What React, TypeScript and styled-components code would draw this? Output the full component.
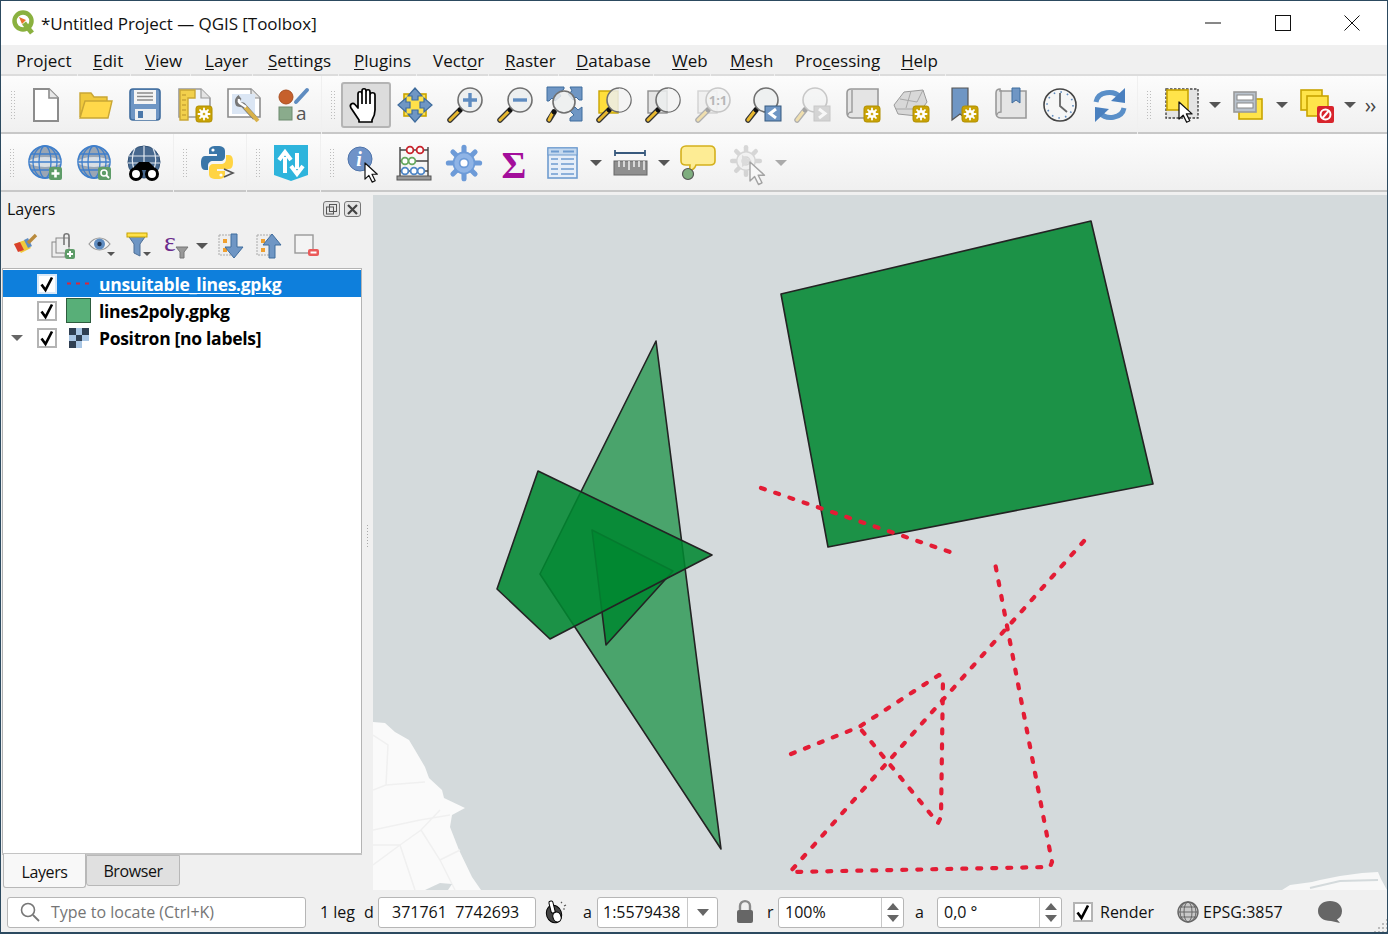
import React from 'react';
import styled, { createGlobalStyle } from 'styled-components';

const UI_FONT = `'Open Sans', 'Noto Sans', sans-serif`;

const GlobalStyle = createGlobalStyle`
  html, body { margin: 0; padding: 0; overflow: hidden; background: #f0f0f0; }
  * { box-sizing: border-box; }
`;

const Window = styled.div`
  width: 1388px;
  height: 934px;
  display: flex;
  flex-direction: column;
  background: #f0f0f0;
  border: 1px solid #2c4a60;
  border-bottom-width: 2px;
  font-family: ${UI_FONT};
  color: #111;
  overflow: hidden;
`;

const TitleBar = styled.div`
  height: 44px;
  background: #fff;
  display: flex;
  align-items: center;
  padding-left: 10px;
  flex: none;
`;

const TitleText = styled.div`
  margin-left: 4px;
  font-size: 17px;
  letter-spacing: -0.05px;
`;

const WindowButtons = styled.div`
  margin-left: auto;
  display: flex;
`;

const WindowButton = styled.div`
  width: 69.5px;
  height: 44px;
  display: flex;
  align-items: center;
  justify-content: center;
`;

const MenuBar = styled.div`
  height: 31px;
  display: flex;
  gap: 1px;
  flex: none;
`;

const MenuItem = styled.div<{ $w: number; $pl: number }>`
  width: ${(p) => p.$w}px;
  padding-left: ${(p) => p.$pl}px;
  height: 31px;
  line-height: 31px;
  font-size: 17px;
  white-space: nowrap;
  border-bottom: 2px solid #dcdcdc;
  u { text-underline-offset: 2px; }
`;

const MenuFill = styled.div`
  flex: 1;
  border-bottom: 2px solid #dcdcdc;
  margin-right: 1px;
`;

const ToolRow = styled.div`
  height: 58px;
  display: flex;
  gap: 1px;
  flex: none;
`;

const ToolGroup = styled.div<{ $w?: number; $pad: number }>`
  ${(p) => (p.$w ? `width: ${p.$w}px;` : 'flex: 1;')}
  padding: 2px 0 0 ${(p) => p.$pad}px;
  display: flex;
  align-items: center;
  background: linear-gradient(#fcfcfc, #f0f0f0);
  border-bottom: 2px solid #c8c8c8;
`;

const Handle = styled.div`
  width: 6px;
  height: 30px;
  margin-right: 5px;
  flex: none;
  background-image: radial-gradient(#bdbdbd 0.8px, transparent 1px);
  background-size: 3px 3px;
`;

const Tool = styled.div<{ $active?: boolean; $off?: boolean }>`
  width: 49.6px;
  height: 46px;
  flex: none;
  display: flex;
  align-items: center;
  justify-content: center;
  border-radius: 3px;
  opacity: ${(p) => (p.$off ? 0.35 : 1)};
  ${(p) => p.$active && 'background: #dcdcdc; border: 2px solid #b4b4b4;'}
`;

const Drop = styled.div<{ $off?: boolean }>`
  width: 16px;
  margin-right: 2px;
  flex: none;
  display: flex;
  justify-content: center;
  &::after {
    content: '';
    border-left: 6px solid transparent;
    border-right: 6px solid transparent;
    border-top: 6px solid ${(p) => (p.$off ? '#aaa' : '#555')};
  }
`;

const PanelDrop = styled(Drop)`
  margin-left: -2px;
`;

const Chevrons = styled.div`
  margin-left: 5px;
  font-size: 21px;
  line-height: 21px;
  color: #444;
  letter-spacing: -1px;
`;

const Main = styled.div`
  flex: 1;
  min-height: 0;
  display: flex;
`;

const LeftPanel = styled.div`
  width: 361px;
  flex: none;
  display: flex;
  flex-direction: column;
`;

const PanelHeader = styled.div`
  height: 32px;
  padding: 2px 1px 0 6px;
  display: flex;
  align-items: center;
  justify-content: space-between;
  font-size: 16px;
`;

const DockButtons = styled.div`
  display: flex;
  gap: 4px;
`;

const DockButton = styled.div`
  width: 17px;
  height: 16px;
  border: 1.5px solid #777;
  border-radius: 3px;
  background: #e4e4e4;
  display: flex;
  align-items: center;
  justify-content: center;
`;

const PanelTools = styled.div`
  height: 44px;
  padding-left: 5px;
  display: flex;
  align-items: center;
`;

const PanelTool = styled.div`
  width: 38px;
  flex: none;
  display: flex;
  justify-content: center;
`;

const Tree = styled.div`
  flex: 1;
  margin-left: 1px;
  background: #fff;
  border: 1px solid #b4b4b4;
  border-bottom: none;
  padding-top: 1px;
`;

const TreeRow = styled.div<{ $selected?: boolean }>`
  height: 27px;
  display: flex;
  align-items: center;
  background: ${(p) => (p.$selected ? '#0e7fdc' : 'transparent')};
`;

const Expander = styled.div`
  width: 34px;
  flex: none;
  display: flex;
  justify-content: center;
  padding-right: 6px;
`;

const ExpandArrow = styled.div`
  border-left: 6px solid transparent;
  border-right: 6px solid transparent;
  border-top: 6px solid #666;
`;

const Check = styled.div<{ $selected?: boolean; $ml?: number }>`
  width: 20px;
  height: 20px;
  margin-left: ${(p) => p.$ml ?? 0}px;
  flex: none;
  background: #fff;
  border: 2px solid ${(p) => (p.$selected ? '#d8e8f8' : '#b4b4b4')};
  display: flex;
  align-items: center;
  justify-content: center;
`;

const LayerIcon = styled.div`
  width: 25px;
  height: 25px;
  margin: 0 8px 0 9px;
  flex: none;
  display: flex;
  align-items: center;
  justify-content: center;
`;

const LayerName = styled.div<{ $selected?: boolean }>`
  font-size: 17.5px;
  font-weight: 700;
  letter-spacing: -0.3px;
  white-space: nowrap;
  color: ${(p) => (p.$selected ? '#fff' : '#000')};
  ${(p) => p.$selected && 'text-decoration: underline; text-underline-offset: 2px;'}
`;

const TabBar = styled.div`
  height: 37px;
  flex: none;
  padding-left: 1px;
  display: flex;
  align-items: flex-start;
  border-top: 2px solid #c4c4c4;
  margin-left: 1px;
`;

const Tab = styled.div<{ $active?: boolean }>`
  height: ${(p) => (p.$active ? 34 : 31)}px;
  width: ${(p) => (p.$active ? 83 : 94)}px;
  margin-top: ${(p) => (p.$active ? -1 : 0)}px;
  padding-top: ${(p) => (p.$active ? 2 : 0)}px;
  background: ${(p) => (p.$active ? '#f8f8f8' : '#e0e0e0')};
  border: 1px solid #b8b8b8;
  border-top: ${(p) => (p.$active ? 'none' : '1px solid #b8b8b8')};
  border-radius: 0 0 3px 3px;
  font-size: 16px;
  letter-spacing: -0.4px;
  display: flex;
  align-items: center;
  justify-content: center;
`;

const Splitter = styled.div`
  width: 11px;
  flex: none;
  display: flex;
  align-items: center;
  justify-content: center;
  padding-bottom: 10px;
  &::after {
    content: '';
    width: 3px;
    height: 24px;
    background-image: radial-gradient(#aaa 0.8px, transparent 1px);
    background-size: 3px 3px;
  }
`;

const MapCanvas = styled.div`
  flex: 1;
  margin-top: 3px;
  background: #d4dadc;
  min-width: 0;
`;

const MapSvg = styled.svg`
  display: block;
  width: 100%;
  height: 100%;
`;

const StatusBar = styled.div`
  height: 42px;
  flex: none;
  padding: 2px 0 0 6px;
  display: flex;
  align-items: center;
  font-size: 16px;
  position: relative;
`;

const Field = styled.div<{ $w: number; $ml?: number }>`
  width: ${(p) => p.$w}px;
  margin-left: ${(p) => p.$ml ?? 0}px;
  height: 31px;
  flex: none;
  background: #fff;
  border: 1.5px solid #b6b6b6;
  border-radius: 3px;
  display: flex;
  align-items: center;
  overflow: hidden;
`;

const FieldText = styled.span<{ $pl: number; $muted?: boolean }>`
  padding-left: ${(p) => p.$pl}px;
  white-space: pre;
  flex: 1;
  display: flex;
  align-items: center;
  gap: 10px;
  color: ${(p) => (p.$muted ? '#757575' : '#111')};
`;

const StatusLabel = styled.div<{ $w: number; $ml?: number }>`
  width: ${(p) => p.$w}px;
  margin-left: ${(p) => p.$ml ?? 0}px;
  flex: none;
  white-space: nowrap;
`;

const StatusIcon = styled.div<{ $ml?: number }>`
  width: 24px;
  margin-left: ${(p) => p.$ml ?? 0}px;
  flex: none;
  display: flex;
  justify-content: center;
`;

const SpinBox = styled.div`
  width: 22px;
  height: 100%;
  flex: none;
  border-left: 1px solid #c8c8c8;
  display: flex;
  flex-direction: column;
  align-items: center;
  justify-content: center;
  gap: 5px;
`;

const SpinUp = styled.div`
  border-left: 6px solid transparent;
  border-right: 6px solid transparent;
  border-bottom: 7px solid #666;
`;

const SpinDown = styled.div`
  border-left: 6px solid transparent;
  border-right: 6px solid transparent;
  border-top: 7px solid #666;
`;

const ComboArrow = styled.div`
  width: 30px;
  height: 100%;
  flex: none;
  border-left: 1px solid #c8c8c8;
  display: flex;
  align-items: center;
  justify-content: center;
  &::after {
    content: '';
    border-left: 6px solid transparent;
    border-right: 6px solid transparent;
    border-top: 7px solid #666;
  }
`;

const SizeGrip = styled.div`
  position: absolute;
  right: 0;
  bottom: 0;
  width: 14px;
  height: 14px;
  background-image: radial-gradient(#bbb 0.8px, transparent 1px);
  background-size: 4px 4px;
  clip-path: polygon(100% 0, 100% 100%, 0 100%);
`;

const IconSvg = styled.svg`
  display: block;
  flex: none;
  overflow: visible;
`;

const Ico = ({ children, s = 36, v = 36 }: { children: React.ReactNode; s?: number; v?: number }) => (
  <IconSvg width={s} height={s} viewBox={`0 0 ${v} ${v}`}>
    {children}
  </IconSvg>
);

const TEETH = [0, 45, 90, 135];

// eight thin teeth round a body with a hole
const Gear = ({ cx, cy, r, color, body, hole }: { cx: number; cy: number; r: number; color: string; body?: string; hole: string }) => (
  <g>
    {TEETH.map((a) => (
      <line
        key={a}
        x1={cx}
        y1={cy - r * 0.92}
        x2={cx}
        y2={cy + r * 0.92}
        stroke={color}
        strokeWidth={r * 0.3}
        strokeLinecap="round"
        transform={`rotate(${a} ${cx} ${cy})`}
      />
    ))}
    <circle cx={cx} cy={cy} r={r * 0.62} fill={body ?? color} stroke={color} strokeWidth={r * 0.1} />
    <circle cx={cx} cy={cy} r={r * 0.26} fill={hole} stroke={color} strokeWidth={r * 0.1} />
  </g>
);

const Badge = ({ x, y, s = 16 }: { x: number; y: number; s?: number }) => (
  <g>
    <rect x={x} y={y} width={s} height={s} rx="2.5" fill="#c9a304" stroke="#b08e00" />
    <Gear cx={x + s / 2} cy={y + s / 2} r={s * 0.38} color="#fff" hole="#c9a304" />
  </g>
);

const Cursor = ({ x, y, s = 1 }: { x: number; y: number; s?: number }) => (
  <path
    transform={`translate(${x} ${y}) scale(${s})`}
    d="M0 0V19L4.6 14.6L8.5 22.5L12 20.8L8.2 13.2H14.5Z"
    fill="#fff"
    stroke="#111"
    strokeWidth="1.4"
    strokeLinejoin="round"
  />
);

// magnifier with the yellow handle, children are drawn in the lens
const Lens = ({ children, cx = 23, cy = 13, r = 12 }: { children?: React.ReactNode; cx?: number; cy?: number; r?: number }) => (
  <g>
    <line x1={cx - 10} y1={cy + 10} x2="3" y2="33" stroke="#333" strokeWidth="5.5" strokeLinecap="round" />
    <line x1={cx - 12} y1={cy + 12} x2="3" y2="33" stroke="#e9b92f" strokeWidth="3" strokeLinecap="round" />
    <circle cx={cx - 10} cy={cy + 10} r="2.4" fill="#111" />
    <circle cx={cx} cy={cy} r={r} fill="#eceeee" fillOpacity="0.85" stroke="#707070" strokeWidth="1.6" />
    {children}
  </g>
);

const NewIcon = () => (
  <Ico>
    <path d="M6 2H21L30 11V34H6Z" fill="#fff" stroke="#8c8c8c" strokeWidth="2" />
    <path d="M21 2V11H30" fill="#e8e8e8" stroke="#8c8c8c" strokeWidth="1.6" />
  </Ico>
);

const OpenIcon = () => (
  <Ico>
    <path d="M3 30V6H14L17 10H30V16H8Z" fill="#f0c93c" stroke="#c9a635" strokeWidth="1.4" />
    <path d="M8 14H35L31 31H3Z" fill="#ffd84a" stroke="#c9a635" strokeWidth="1.4" />
  </Ico>
);

const SaveIcon = () => (
  <Ico>
    <rect x="3" y="2" width="30" height="31" rx="3" fill="#6f96c4" stroke="#3f6c9d" strokeWidth="1.6" />
    <rect x="7" y="3" width="22" height="14" fill="#f4f4f4" />
    <path d="M10 6H26M10 9.5H26M10 13H26" stroke="#8a8a8a" strokeWidth="1.3" />
    <rect x="8" y="22" width="21" height="11" fill="#eef0f2" />
    <rect x="11" y="24" width="5" height="7" fill="#4b78aa" />
  </Ico>
);

const LayoutIcon = () => (
  <Ico>
    <path d="M2 2H24L33 11V30H2Z" fill="#f2f4f8" stroke="#9a9a9a" strokeWidth="1.6" />
    <path d="M24 2V11H33" fill="#e4e4e4" stroke="#9a9a9a" strokeWidth="1.2" />
    <path d="M3 3H18V11H11V33H3Z" fill="#f2d04c" stroke="#c9a635" strokeWidth="1.4" />
    <path d="M5 8H9M5 13H9M5 18H9M5 23H9M5 28H9" stroke="#b8912a" strokeWidth="1" />
    <Badge x={19} y={19} />
  </Ico>
);

const ManagerIcon = () => (
  <Ico>
    <path d="M2 2H25L34 11V30H2Z" fill="#fff" stroke="#8c8c8c" strokeWidth="1.6" />
    <path d="M25 2V11H34" fill="#e4e4e4" stroke="#8c8c8c" strokeWidth="1.2" />
    <rect x="6" y="7" width="23" height="20" fill="#dbe6f4" />
    <path d="M14 10A6 6 0 0 0 12 17L17 18L29 31" fill="none" stroke="#777" strokeWidth="5" strokeLinejoin="round" />
    <path d="M19 20L32 34" stroke="#d9b24a" strokeWidth="4" />
    <path d="M13 12A4 4 0 0 0 14 16L20 20" fill="none" stroke="#fff" strokeWidth="2.5" />
  </Ico>
);

const StyleIcon = () => (
  <Ico>
    <circle cx="10" cy="10" r="7" fill="#c6602c" stroke="#a94e20" />
    <line x1="20" y1="15" x2="31" y2="3" stroke="#5f8cc0" strokeWidth="4" strokeLinecap="round" />
    <rect x="3" y="20" width="13" height="13" fill="#8aab8c" stroke="#6c8a6e" />
    <text x="20" y="33" fontFamily="'Open Sans', sans-serif" fontSize="19" fill="#555">a</text>
  </Ico>
);

const HandIcon = () => (
  <Ico>
    <path
      d="M11 33L3 21C1 17.5 4.5 15 7 17.5L10 21V7C10 4 14 4 14 7V4C14 1 18 1 18 4V5C18 2 22 2 22 5V8C22 5 27 5 27 8V23C27 27 26 30 24 33V35H11ZM14 7V17M18 5V17M22 8V17"
      fill="#fff"
      stroke="#000"
      strokeWidth="1.7"
      strokeLinejoin="round"
    />
  </Ico>
);

const Arrow4 = ({ r }: { r: number }) => (
  <polygon
    transform={`rotate(${r} 18 18)`}
    points="18,1 25,9 21,9 21,13 15,13 15,9 11,9"
    fill="#6f96c4"
    stroke="#3f6c9d"
    strokeWidth="1.2"
  />
);

const PanSelectedIcon = () => (
  <Ico>
    <rect x="7" y="7" width="22" height="22" fill="#ffe14a" stroke="#c9a400" strokeWidth="1.6" />
    <Arrow4 r={0} />
    <Arrow4 r={90} />
    <Arrow4 r={180} />
    <Arrow4 r={270} />
  </Ico>
);

const ZoomInIcon = () => (
  <Ico>
    <Lens>
      <path d="M23 6V20M16 13H30" stroke="#5f8cc0" strokeWidth="3.4" />
    </Lens>
  </Ico>
);

const ZoomOutIcon = () => (
  <Ico>
    <Lens>
      <path d="M16 13H30" stroke="#5f8cc0" strokeWidth="3.4" />
    </Lens>
  </Ico>
);

const ZoomFullIcon = () => (
  <Ico>
    <path d="M6 0H18V2L13 6L15 9L9 14L6 11L3 14H1V0Z" fill="#6f96c4" stroke="#3f6c9d" />
    <path d="M24 0H36V13H33L30 10L27 13L22 7L26 4Z" fill="#6f96c4" stroke="#3f6c9d" />
    <path d="M36 34H24V31L28 28L24 24L29 20L32 23L36 20Z" fill="#6f96c4" stroke="#3f6c9d" />
    <Lens cx={18} cy={15} r={11} />
  </Ico>
);

const ZoomSelectionIcon = () => (
  <Ico>
    <rect x="3" y="4" width="19" height="22" fill="#ffdf3c" stroke="#c9a400" strokeWidth="1.4" />
    <Lens cx={23} cy={13} r={12}>
      <path d="M23 1.5A11.5 11.5 0 0 1 23 24.5Z" fill="#f4f4f4" />
    </Lens>
  </Ico>
);

const ZoomLayerIcon = () => (
  <Ico>
    <rect x="3" y="4" width="19" height="22" fill="#e4e4e4" stroke="#8f8f8f" strokeWidth="1.4" />
    <Lens cx={23} cy={13} r={12}>
      <path d="M23 1.5A11.5 11.5 0 0 1 23 24.5Z" fill="#f4f4f4" />
    </Lens>
  </Ico>
);

const ZoomNativeIcon = () => (
  <Ico>
    <rect x="3" y="4" width="19" height="22" fill="#e4e4e4" stroke="#8f8f8f" strokeWidth="1.4" />
    <Lens cx={23} cy={13} r={12}>
      <text x="23" y="18" textAnchor="middle" fontFamily="'Open Sans', sans-serif" fontWeight="700" fontSize="13" fill="#444">1:1</text>
    </Lens>
  </Ico>
);

const ZoomLastIcon = ({ next }: { next?: boolean }) => (
  <Ico>
    <Lens cx={21} cy={13} r={12} />
    <rect x="20" y="19" width="16" height="15" fill={next ? '#9a9a9a' : '#6f96c4'} stroke={next ? '#777' : '#34597f'} />
    <path d={next ? 'M25 22L31 26.5L25 31' : 'M31 22L25 26.5L31 31'} fill="none" stroke="#fff" strokeWidth="3" />
  </Ico>
);

const MapViewIcon = () => (
  <Ico>
    <path d="M7 2H34V31H8C4 31 3 28 3 26V6C3 3 5 2 7 2Z" fill="#e4e4e4" stroke="#999" strokeWidth="1.6" />
    <path d="M8 3V25C5 25 4 27 4 28" fill="none" stroke="#999" strokeWidth="1.4" />
    <Badge x={20} y={19} />
  </Ico>
);

const Map3dIcon = () => (
  <Ico>
    <path d="M1 18L11 5L30 3L34 15L24 29L5 27Z" fill="#d8d8d8" stroke="#9a9a9a" />
    <path d="M7 12L24 15L30 3M13 21L18 4M3 22L28 22" fill="none" stroke="#a8a8a8" />
    <Badge x={20} y={19} />
  </Ico>
);

const BookmarkNewIcon = () => (
  <Ico>
    <path d="M9 1H25V33L17 27L9 33Z" fill="#6f96c4" stroke="#555" strokeWidth="1.2" />
    <Badge x={19} y={19} />
  </Ico>
);

const BookmarksIcon = () => (
  <Ico>
    <path d="M7 4H33V31H8C4 31 3 28 3 26V6C3 3 5 2 7 2Z" fill="#e4e4e4" stroke="#999" strokeWidth="1.6" />
    <path d="M8 3V25C5 25 4 27 4 28" fill="none" stroke="#999" strokeWidth="1.4" />
    <path d="M19 1H27V16L23 13L19 16Z" fill="#6f96c4" stroke="#3f6c9d" />
  </Ico>
);

const ClockIcon = () => (
  <Ico>
    <circle cx="18" cy="18" r="16" fill="#f6f6f6" stroke="#444" strokeWidth="1.6" />
    <circle cx="18" cy="18" r="13" fill="none" stroke="#5f8cc0" strokeWidth="1.6" strokeDasharray="1.6 5.2" />
    <path d="M18 6V19L25 25" fill="none" stroke="#666" strokeWidth="1.8" />
  </Ico>
);

const RefreshIcon = () => (
  <Ico>
    <path d="M4 15C6 4 22 3 28 10" fill="none" stroke="#5a8fc8" strokeWidth="5" />
    <polygon points="33,1 33,16 19,14" fill="#4a80bf" />
    <path d="M32 21C30 32 14 33 8 26" fill="none" stroke="#5a8fc8" strokeWidth="5" />
    <polygon points="3,35 3,20 17,22" fill="#4a80bf" />
  </Ico>
);

const SelectIcon = () => (
  <Ico>
    <rect x="2" y="2" width="32" height="29" fill="#e4e4e4" stroke="#444" strokeWidth="1.4" strokeDasharray="2.5 1.5" />
    <rect x="3" y="3" width="21" height="20" fill="#ffe44a" stroke="#c9a400" strokeWidth="1.6" />
    <Cursor x={15} y={15} s={0.9} />
  </Ico>
);

const SelectAttrIcon = () => (
  <Ico>
    <rect x="8" y="12" width="23" height="20" fill="#ffe44a" stroke="#c9a400" strokeWidth="1.6" />
    <rect x="3" y="5" width="22" height="20" fill="#b9c2cc" stroke="#999" strokeWidth="1.6" />
    <rect x="6" y="8" width="16" height="5" fill="#fff" stroke="#888" />
    <rect x="6" y="16" width="16" height="5" fill="#fff" stroke="#888" />
  </Ico>
);

const DeselectIcon = () => (
  <Ico>
    <rect x="2" y="3" width="21" height="20" fill="#ffe44a" stroke="#c9a400" strokeWidth="1.6" />
    <rect x="8" y="9" width="21" height="20" fill="#ffe44a" stroke="#c9a400" strokeWidth="1.6" />
    <rect x="18" y="19" width="17" height="17" rx="2" fill="#d8242c" />
    <circle cx="26.5" cy="27.5" r="5" fill="none" stroke="#fff" strokeWidth="2" />
    <line x1="23.5" y1="31" x2="29.5" y2="24" stroke="#fff" strokeWidth="2" />
  </Ico>
);

const Globe = () => (
  <g transform="translate(1 0)">
    <circle cx="17" cy="17" r="16" fill="#9aa6b4" stroke="#3f7fcb" strokeWidth="1.6" />
    <ellipse cx="17" cy="17" rx="16" ry="5" fill="#eef2f6" fillOpacity="0.75" />
    <g fill="none" stroke="#3f7fcb" strokeWidth="1.3">
      <ellipse cx="17" cy="17" rx="6" ry="16" />
      <ellipse cx="17" cy="17" rx="12" ry="16" />
      <path d="M3 9H31M1 17H33M3 25H31" />
    </g>
  </g>
);

const GlobeAddIcon = () => (
  <Ico>
    <Globe />
    <rect x="22" y="22" width="13" height="13" rx="2" fill="#5e9c68" />
    <path d="M28.5 24.5V32.5M24.5 28.5H32.5" stroke="#fff" strokeWidth="2.6" />
  </Ico>
);

const GlobeSearchIcon = () => (
  <Ico>
    <Globe />
    <rect x="22" y="22" width="13" height="13" rx="2" fill="#5e9c68" />
    <circle cx="28" cy="28" r="3" fill="none" stroke="#fff" strokeWidth="1.6" />
    <line x1="30" y1="30" x2="33" y2="33" stroke="#fff" strokeWidth="1.8" />
  </Ico>
);

const GlobeBinocularsIcon = () => (
  <Ico>
    <circle cx="18" cy="17" r="16" fill="#47688e" stroke="#2f4f74" />
    <path d="M3 11H33M2 18H34M18 1V24M9 3C5 12 6 20 9 26M27 3C31 12 30 20 27 26" fill="none" stroke="#dfe6ee" strokeWidth="1.2" />
    <circle cx="10" cy="29" r="5.5" fill="#fff" stroke="#000" strokeWidth="3" />
    <circle cx="26" cy="29" r="5.5" fill="#fff" stroke="#000" strokeWidth="3" />
    <path d="M8 22L13 17H23L28 22V25H8Z" fill="#000" />
  </Ico>
);

const PY = 'M17 1C10 1 9 3 9 6V9H17V11H5C2 11 1 14 1 18S2 25 5 25H8V21C8 18 10 16 13 16H21C23 16 25 14 25 12V6C25 3 23 1 17 1Z';

const PythonIcon = () => (
  <Ico>
    <path d={PY} fill="#3a76a8" />
    <circle cx="13" cy="5" r="1.6" fill="#fff" />
    <path d={PY} fill="#ffd443" transform="rotate(180 17 17.5)" />
    <circle cx="21" cy="30" r="1.6" fill="#fff" />
    <path d="M24 24L33 28L24 32" fill="none" stroke="#555" strokeWidth="1.6" />
  </Ico>
);

const SyncIcon = () => (
  <Ico>
    <path d="M1 0H35V30L18 36L1 30Z" fill="#2eb4dc" />
    <path d="M12 28V12M6 15L12 7L18 15" fill="none" stroke="#fff" strokeWidth="4" />
    <path d="M24 8V24M18 21L24 29L30 21" fill="none" stroke="#fff" strokeWidth="4" />
  </Ico>
);

const IdentifyIcon = () => (
  <Ico>
    <circle cx="13" cy="14" r="12" fill="#6f93c8" stroke="#4f74aa" />
    <text x="12" y="21" textAnchor="middle" fontFamily="'Liberation Serif', serif" fontStyle="italic" fontWeight="700" fontSize="20" fill="#fff">i</text>
    <Cursor x={18} y={18} s={0.85} />
  </Ico>
);

const AbacusIcon = () => (
  <Ico>
    <path d="M4 2V31M32 2V31M4 5H32M4 16H32M4 26H32" stroke="#444" strokeWidth="1.4" />
    <rect x="1" y="31" width="34" height="4" fill="#999" stroke="#555" />
    <g fill="#fff" strokeWidth="1.8">
      <circle cx="14" cy="5" r="3.4" stroke="#c8242c" />
      <circle cx="24" cy="5" r="3.4" stroke="#c8242c" />
      <circle cx="9" cy="16" r="3.4" stroke="#67a85f" />
      <circle cx="16" cy="16" r="3.4" stroke="#67a85f" />
      <circle cx="9" cy="26" r="3.4" stroke="#4f86c6" />
      <circle cx="18" cy="26" r="3.4" stroke="#4f86c6" />
      <circle cx="25" cy="26" r="3.4" stroke="#4f86c6" />
    </g>
  </Ico>
);

const GearIcon = () => (
  <Ico>
    <Gear cx={18} cy={18} r={17} color="#6d9bd8" body="#8fb4e6" hole="#fff" />
  </Ico>
);

const SigmaIcon = () => (
  <Ico>
    <text x="18" y="33" textAnchor="middle" fontFamily="'Liberation Serif', serif" fontWeight="700" fontSize="38" fill="#a30e9b">Σ</text>
  </Ico>
);

const TableIcon = () => (
  <Ico>
    <rect x="3" y="3" width="29" height="30" fill="#e6eef8" stroke="#6f9ccf" strokeWidth="1.6" />
    <rect x="3" y="3" width="29" height="7" fill="#c4d8ee" stroke="#6f9ccf" />
    <path d="M6 6.5H14M18 6.5H29" stroke="#6f9ccf" strokeWidth="2" />
    <path d="M6 14H13M16 14H29M6 19H13M16 19H29M6 24H13M16 24H29M6 29H13M16 29H29" stroke="#6f9ccf" strokeWidth="1.6" />
  </Ico>
);

const MeasureIcon = () => (
  <Ico>
    <path d="M2 8H32M2 5V11M32 5V11" stroke="#38597d" strokeWidth="1.8" />
    <rect x="1" y="16" width="33" height="14" fill="#8f8f8f" stroke="#666" />
    <path d="M6 16V22M11 16V22M16 16V25M21 16V22M26 16V22M31 16V25" stroke="#fff" strokeWidth="1.3" />
  </Ico>
);

const AnnotationIcon = () => (
  <Ico>
    <path d="M6 1H30C33 1 35 3 35 6V16C35 19 33 20 30 20H16C15 23 13 25 9 26C10 24 10 22 10 20H6C3 20 1 19 1 16V6C1 3 3 1 6 1Z" fill="#fdec94" stroke="#d4b01c" strokeWidth="1.6" />
    <circle cx="8" cy="29" r="5.5" fill="#7fae7f" stroke="#555" strokeWidth="1.2" />
  </Ico>
);

const RunIcon = () => (
  <Ico>
    <Gear cx={16} cy={16} r={15} color="#999" body="#e8e8e8" hole="#e8e8e8" />
    <polygon points="12,10 12,22 22,16" fill="#aaa" />
    <Cursor x={20} y={17} />
  </Ico>
);

const BrushIcon = () => (
  <Ico s={26} v={26}>
    <path d="M2 11L13 7L19 15L9 20Z" fill="#f0c93c" />
    <path d="M2 11L8 9L12 17L6 19Z" fill="#d8402c" />
    <path d="M12 7L16 5L20 13L16 15Z" fill="#5f8cc0" />
    <line x1="16" y1="10" x2="24" y2="2" stroke="#b98a3c" strokeWidth="3.4" />
  </Ico>
);

const AddGroupIcon = () => (
  <Ico s={26} v={26}>
    <rect x="2" y="9" width="13" height="15" fill="#eee" stroke="#888" />
    <rect x="6" y="5" width="13" height="15" fill="#eee" stroke="#888" />
    <path d="M14 12V3C14 0 19 0 19 3V14" fill="none" stroke="#777" strokeWidth="1.6" />
    <rect x="15" y="16" width="10" height="10" rx="2" fill="#5e9c68" />
    <path d="M20 18V24M17 21H23" stroke="#fff" strokeWidth="2" />
  </Ico>
);

const EyeIcon = () => (
  <Ico s={26} v={26}>
    <path d="M1 11C7 3 16 3 22 11C16 19 7 19 1 11Z" fill="#f4f4f4" stroke="#999" strokeWidth="1.2" />
    <circle cx="11.5" cy="11" r="5.5" fill="#5f8cc0" />
    <circle cx="11.5" cy="11" r="2.2" fill="#1f3350" />
    <polygon points="19,19 27,19 23,23" fill="#555" />
  </Ico>
);

const FilterIcon = () => (
  <Ico s={26} v={26}>
    <path d="M1 1H21L14 11V23L8 20V11Z" fill="#6f96c4" stroke="#4f6f96" />
    <rect x="1" y="0" width="20" height="4" fill="#ffe14a" stroke="#c9a400" />
    <polygon points="17,19 25,19 21,23" fill="#555" />
  </Ico>
);

const EpsilonIcon = () => (
  <Ico s={26} v={26}>
    <text x="0" y="18" fontFamily="'Liberation Serif', serif" fontSize="28" fill="#6b2c8c">ε</text>
    <path d="M12 14H24L20 19V25H16V19Z" fill="#999" stroke="#777" />
  </Ico>
);

const MoveIcon = ({ up }: { up?: boolean }) => (
  <Ico s={26} v={26}>
    <rect x="1" y="2" width="14" height="20" fill="#eee" stroke="#aaa" strokeDasharray="2 1" />
    <rect x="5" y="6" width="4" height="4" fill="#f0a030" />
    <rect x="5" y="15" width="4" height="4" fill="#f0a030" />
    <polygon
      transform={up ? 'rotate(180 16 13)' : undefined}
      points="13,1 19,1 19,14 25,14 16,25 7,14 13,14"
      fill="#6f96c4"
      stroke="#3f6c9d"
    />
  </Ico>
);

const RemoveIcon = () => (
  <Ico s={26} v={26}>
    <rect x="1" y="2" width="18" height="18" fill="#f4f4f4" stroke="#999" strokeWidth="1.4" />
    <rect x="14" y="16" width="11" height="7" rx="2" fill="#ea5a5a" />
    <line x1="16.5" y1="19.5" x2="22.5" y2="19.5" stroke="#fff" strokeWidth="2" />
  </Ico>
);

const QgisLogo = () => (
  <Ico s={26} v={26}>
    <circle cx="12" cy="11" r="8.5" fill="none" stroke="#8ab13f" strokeWidth="4.5" />
    <path d="M13 13L21 23" stroke="#8ab13f" strokeWidth="5" />
    <path d="M8 7L15 10L11 14Z" fill="#e8722c" />
  </Ico>
);

const CheckMark = () => (
  <Ico s={16} v={16}>
    <path d="M2.5 8.5L6.5 14L13 1.5" fill="none" stroke="#000" strokeWidth="2.6" />
  </Ico>
);

const SearchIcon = () => (
  <Ico s={22} v={22}>
    <circle cx="9" cy="9" r="6.5" fill="none" stroke="#777" strokeWidth="1.6" />
    <line x1="14" y1="14" x2="20" y2="20" stroke="#777" strokeWidth="1.8" />
  </Ico>
);

const MouseIcon = () => (
  <Ico s={24} v={24}>
    <ellipse cx="11" cy="14" rx="7.5" ry="9" fill="#444" stroke="#000" transform="rotate(-20 11 14)" />
    <ellipse cx="14" cy="17" rx="4" ry="5" fill="#fff" stroke="#000" transform="rotate(-20 14 17)" />
    <rect x="7" y="1" width="4" height="12" rx="1.5" fill="#fff" stroke="#000" transform="rotate(-14 9 7)" />
    <path d="M18 3L19 2M21 6L23 5M20 9L22 9" stroke="#555" strokeWidth="1.2" />
  </Ico>
);

const LockIcon = () => (
  <Ico s={24} v={24}>
    <path d="M7 11V6C7 -0.5 17 -0.5 17 6V11" fill="none" stroke="#8a8a8a" strokeWidth="2.4" />
    <rect x="4" y="10" width="16" height="13" rx="2" fill="#666" />
  </Ico>
);

const SmallGlobe = () => (
  <Ico s={24} v={24}>
    <circle cx="12" cy="12" r="10" fill="#c8c8c8" stroke="#666" strokeWidth="1.4" />
    <path d="M2 12H22M4 7H20M4 17H20" stroke="#666" />
    <ellipse cx="12" cy="12" rx="4" ry="10" fill="none" stroke="#666" />
    <ellipse cx="12" cy="12" rx="8" ry="10" fill="none" stroke="#666" />
  </Ico>
);

const MessageIcon = () => (
  <Ico s={26} v={26}>
    <path d="M13 2C20 2 25 6 25 12C25 16 23 19 20 20.5L23 24L14 22C6 22 1 18 1 12C1 6 6 2 13 2Z" fill="#666" />
  </Ico>
);

const MENUS: [string, number, number][] = [
  ['Project', 76, 15],
  ['&Edit', 52, 15],
  ['&View', 59, 14],
  ['&Layer', 61, 14],
  ['&Settings', 85, 15],
  ['&Plugins', 77, 15],
  ['Vect&or', 71, 16],
  ['&Raster', 69, 16],
  ['&Database', 94, 17],
  ['&Web', 56, 18],
  ['&Mesh', 63, 19],
  ['Pro&cessing', 104, 20],
  ['&Help', 65, 21],
];

// "&" marks the mnemonic letter, like the Qt menu titles
const MenuLabel = ({ text }: { text: string }) => {
  const i = text.indexOf('&');
  if (i < 0) return <>{text}</>;
  return (
    <>
      {text.slice(0, i)}
      <u>{text[i + 1]}</u>
      {text.slice(i + 2)}
    </>
  );
};

const MapView = () => (
  <MapSvg viewBox="373 195 1014 695" preserveAspectRatio="none">
    <path
      d="M373 722L385 723L395 732L409 740L415 750L425 767L429 778L442 790L444 798L465 808L452 815L450 827L459 850L472 877L481 890H373Z"
      fill="#fafafa"
    />
    <g fill="none" stroke="#f0f0f0" strokeWidth="1.5">
      <path d="M373 735L388 745L386 785L373 790M386 785L425 782M373 830L420 820L450 815M373 865L400 845L421 830L440 810M400 845L415 890M421 830L440 860L455 890M373 845L400 845M440 860L460 850" />
    </g>
    <path d="M425 890L440 883L452 884L448 890Z" fill="#d4dadc" />
    <path d="M1282 890L1290 885L1312 882L1320 880L1340 876L1362 873L1378 872L1381 879L1387 890Z" fill="#f8f8f8" />
    <path d="M1310 888L1340 881L1378 880" fill="none" stroke="#d4dadc" strokeWidth="2" />
    <g stroke="#232323" strokeWidth="1.6" strokeLinejoin="round">
      <polygon points="1091,221 1153,484 828,547 781,294" fill="#008730" fillOpacity="0.87" />
      <polygon points="656,341 721,849 540,574" fill="#008730" fillOpacity="0.65" />
      <polygon points="592,530 673,571 606,645" fill="#008730" fillOpacity="0.87" />
      <polygon points="538,471 712,555 550,639 497,589" fill="#008730" fillOpacity="0.87" />
    </g>
    <g fill="none" stroke="#e31c35" strokeWidth="4.2" strokeLinecap="round" strokeLinejoin="round" strokeDasharray="4 11">
      <path d="M761 488L953 553" />
      <path d="M1084 541L790 872L1050 867L1052 862L995 563" />
      <path d="M791 754L859 727L939 675L943 678L941 817L938 823L859 727" />
    </g>
  </MapSvg>
);

const App = () => (
  <Window>
    <GlobalStyle />
    <TitleBar>
      <QgisLogo />
      <TitleText>*Untitled Project — QGIS [Toolbox]</TitleText>
      <WindowButtons>
        <WindowButton>
          <Ico s={16} v={16}>
            <line x1="0" y1="8" x2="16" y2="8" stroke="#111" />
          </Ico>
        </WindowButton>
        <WindowButton>
          <Ico s={16} v={16}>
            <rect x="0.5" y="0.5" width="15" height="15" fill="none" stroke="#111" />
          </Ico>
        </WindowButton>
        <WindowButton>
          <Ico s={16} v={16}>
            <path d="M0.5 0.5L15.5 15.5M15.5 0.5L0.5 15.5" stroke="#111" />
          </Ico>
        </WindowButton>
      </WindowButtons>
    </TitleBar>

    <MenuBar>
      {MENUS.map(([label, w, pl]) => (
        <MenuItem key={label} $w={w} $pl={pl}>
          <MenuLabel text={label} />
        </MenuItem>
      ))}
      <MenuFill />
    </MenuBar>

    <ToolRow>
      <ToolGroup $w={320} $pad={9}>
        <Handle />
        <Tool><NewIcon /></Tool>
        <Tool><OpenIcon /></Tool>
        <Tool><SaveIcon /></Tool>
        <Tool><LayoutIcon /></Tool>
        <Tool><ManagerIcon /></Tool>
        <Tool><StyleIcon /></Tool>
      </ToolGroup>
      <ToolGroup $w={815} $pad={8}>
        <Handle />
        <Tool $active><HandIcon /></Tool>
        <Tool><PanSelectedIcon /></Tool>
        <Tool><ZoomInIcon /></Tool>
        <Tool><ZoomOutIcon /></Tool>
        <Tool><ZoomFullIcon /></Tool>
        <Tool><ZoomSelectionIcon /></Tool>
        <Tool><ZoomLayerIcon /></Tool>
        <Tool $off><ZoomNativeIcon /></Tool>
        <Tool><ZoomLastIcon /></Tool>
        <Tool $off><ZoomLastIcon next /></Tool>
        <Tool><MapViewIcon /></Tool>
        <Tool><Map3dIcon /></Tool>
        <Tool><BookmarkNewIcon /></Tool>
        <Tool><BookmarksIcon /></Tool>
        <Tool><ClockIcon /></Tool>
        <Tool><RefreshIcon /></Tool>
      </ToolGroup>
      <ToolGroup $pad={8}>
        <Handle />
        <Tool><SelectIcon /></Tool>
        <Drop />
        <Tool><SelectAttrIcon /></Tool>
        <Drop />
        <Tool><DeselectIcon /></Tool>
        <Drop />
        <Chevrons>››</Chevrons>
      </ToolGroup>
    </ToolRow>

    <ToolRow>
      <ToolGroup $w={172} $pad={8}>
        <Handle />
        <Tool><GlobeAddIcon /></Tool>
        <Tool><GlobeSearchIcon /></Tool>
        <Tool><GlobeBinocularsIcon /></Tool>
      </ToolGroup>
      <ToolGroup $w={72} $pad={8}>
        <Handle />
        <Tool><PythonIcon /></Tool>
      </ToolGroup>
      <ToolGroup $w={73} $pad={8}>
        <Handle />
        <Tool><SyncIcon /></Tool>
      </ToolGroup>
      <ToolGroup $pad={8}>
        <Handle />
        <Tool><IdentifyIcon /></Tool>
        <Tool><AbacusIcon /></Tool>
        <Tool><GearIcon /></Tool>
        <Tool><SigmaIcon /></Tool>
        <Tool><TableIcon /></Tool>
        <Drop />
        <Tool><MeasureIcon /></Tool>
        <Drop />
        <Tool><AnnotationIcon /></Tool>
        <Tool $off><RunIcon /></Tool>
        <Drop $off />
      </ToolGroup>
    </ToolRow>

    <Main>
      <LeftPanel>
        <PanelHeader>
          Layers
          <DockButtons>
            <DockButton>
              <Ico s={11} v={11}>
                <rect x="0.5" y="3" width="7" height="7" fill="none" stroke="#555" />
                <rect x="3.5" y="0.5" width="7" height="7" fill="none" stroke="#555" />
              </Ico>
            </DockButton>
            <DockButton>
              <Ico s={11} v={11}>
                <path d="M1 1L10 10M10 1L1 10" stroke="#444" strokeWidth="2.2" />
              </Ico>
            </DockButton>
          </DockButtons>
        </PanelHeader>
        <PanelTools>
          <PanelTool><BrushIcon /></PanelTool>
          <PanelTool><AddGroupIcon /></PanelTool>
          <PanelTool><EyeIcon /></PanelTool>
          <PanelTool><FilterIcon /></PanelTool>
          <PanelTool><EpsilonIcon /></PanelTool>
          <PanelDrop />
          <PanelTool><MoveIcon /></PanelTool>
          <PanelTool><MoveIcon up /></PanelTool>
          <PanelTool><RemoveIcon /></PanelTool>
        </PanelTools>
        <Tree>
          <TreeRow $selected>
            <Expander />
            <Check $selected><CheckMark /></Check>
            <LayerIcon>
              <Ico s={25} v={25}>
                <line x1="1" y1="12.5" x2="24" y2="12.5" stroke="#d8283c" strokeWidth="2" strokeDasharray="4 5" />
              </Ico>
            </LayerIcon>
            <LayerName $selected>unsuitable_lines.gpkg</LayerName>
          </TreeRow>
          <TreeRow>
            <Expander />
            <Check><CheckMark /></Check>
            <LayerIcon>
              <Ico s={25} v={25}>
                <rect x="0.5" y="0.5" width="24" height="24" fill="#58af78" stroke="#2d5c3e" />
              </Ico>
            </LayerIcon>
            <LayerName>lines2poly.gpkg</LayerName>
          </TreeRow>
          <TreeRow>
            <Expander><ExpandArrow /></Expander>
            <Check><CheckMark /></Check>
            <LayerIcon>
              <Ico s={20} v={20}>
                <rect x="0" y="0" width="20" height="20" fill="#fff" />
                <path d="M7 0H13V7H7ZM0 7H7V13H0ZM13 7H20V13H13ZM7 13H13V20H7Z" fill="#a9c6e4" />
                <path d="M0 0H7V7H0ZM13 0H20V7H13ZM7 7H13V13H7ZM0 13H7V20H0Z" fill="#2f3f52" />
              </Ico>
            </LayerIcon>
            <LayerName>Positron [no labels]</LayerName>
          </TreeRow>
        </Tree>
        <TabBar>
          <Tab $active>Layers</Tab>
          <Tab>Browser</Tab>
        </TabBar>
      </LeftPanel>
      <Splitter />
      <MapCanvas>
        <MapView />
      </MapCanvas>
    </Main>

    <StatusBar>
      <Field $w={299}>
        <FieldText $pl={11} $muted>
          <SearchIcon />
          Type to locate (Ctrl+K)
        </FieldText>
      </Field>
      <StatusLabel $w={36} $ml={14}>1 leg</StatusLabel>
      <StatusLabel $w={10} $ml={8}>d</StatusLabel>
      <Field $w={158} $ml={4}>
        <FieldText $pl={13}>371761  7742693</FieldText>
      </Field>
      <StatusIcon $ml={7}><MouseIcon /></StatusIcon>
      <StatusLabel $w={9} $ml={16}>a</StatusLabel>
      <Field $w={121} $ml={5}>
        <FieldText $pl={5}>1:5579438</FieldText>
        <ComboArrow />
      </Field>
      <StatusIcon $ml={15}><LockIcon /></StatusIcon>
      <StatusLabel $w={7} $ml={10}>r</StatusLabel>
      <Field $w={126} $ml={4}>
        <FieldText $pl={6}>100%</FieldText>
        <SpinBox><SpinUp /><SpinDown /></SpinBox>
      </Field>
      <StatusLabel $w={8} $ml={11}>a</StatusLabel>
      <Field $w={125} $ml={14}>
        <FieldText $pl={6}>0,0 °</FieldText>
        <SpinBox><SpinUp /><SpinDown /></SpinBox>
      </Field>
      <Check $ml={11}><CheckMark /></Check>
      <StatusLabel $w={76} $ml={7}>Render</StatusLabel>
      <StatusIcon><SmallGlobe /></StatusIcon>
      <StatusLabel $w={85} $ml={3}>EPSG:3857</StatusLabel>
      <StatusIcon $ml={30}><MessageIcon /></StatusIcon>
      <SizeGrip />
    </StatusBar>
  </Window>
);

export default App;
